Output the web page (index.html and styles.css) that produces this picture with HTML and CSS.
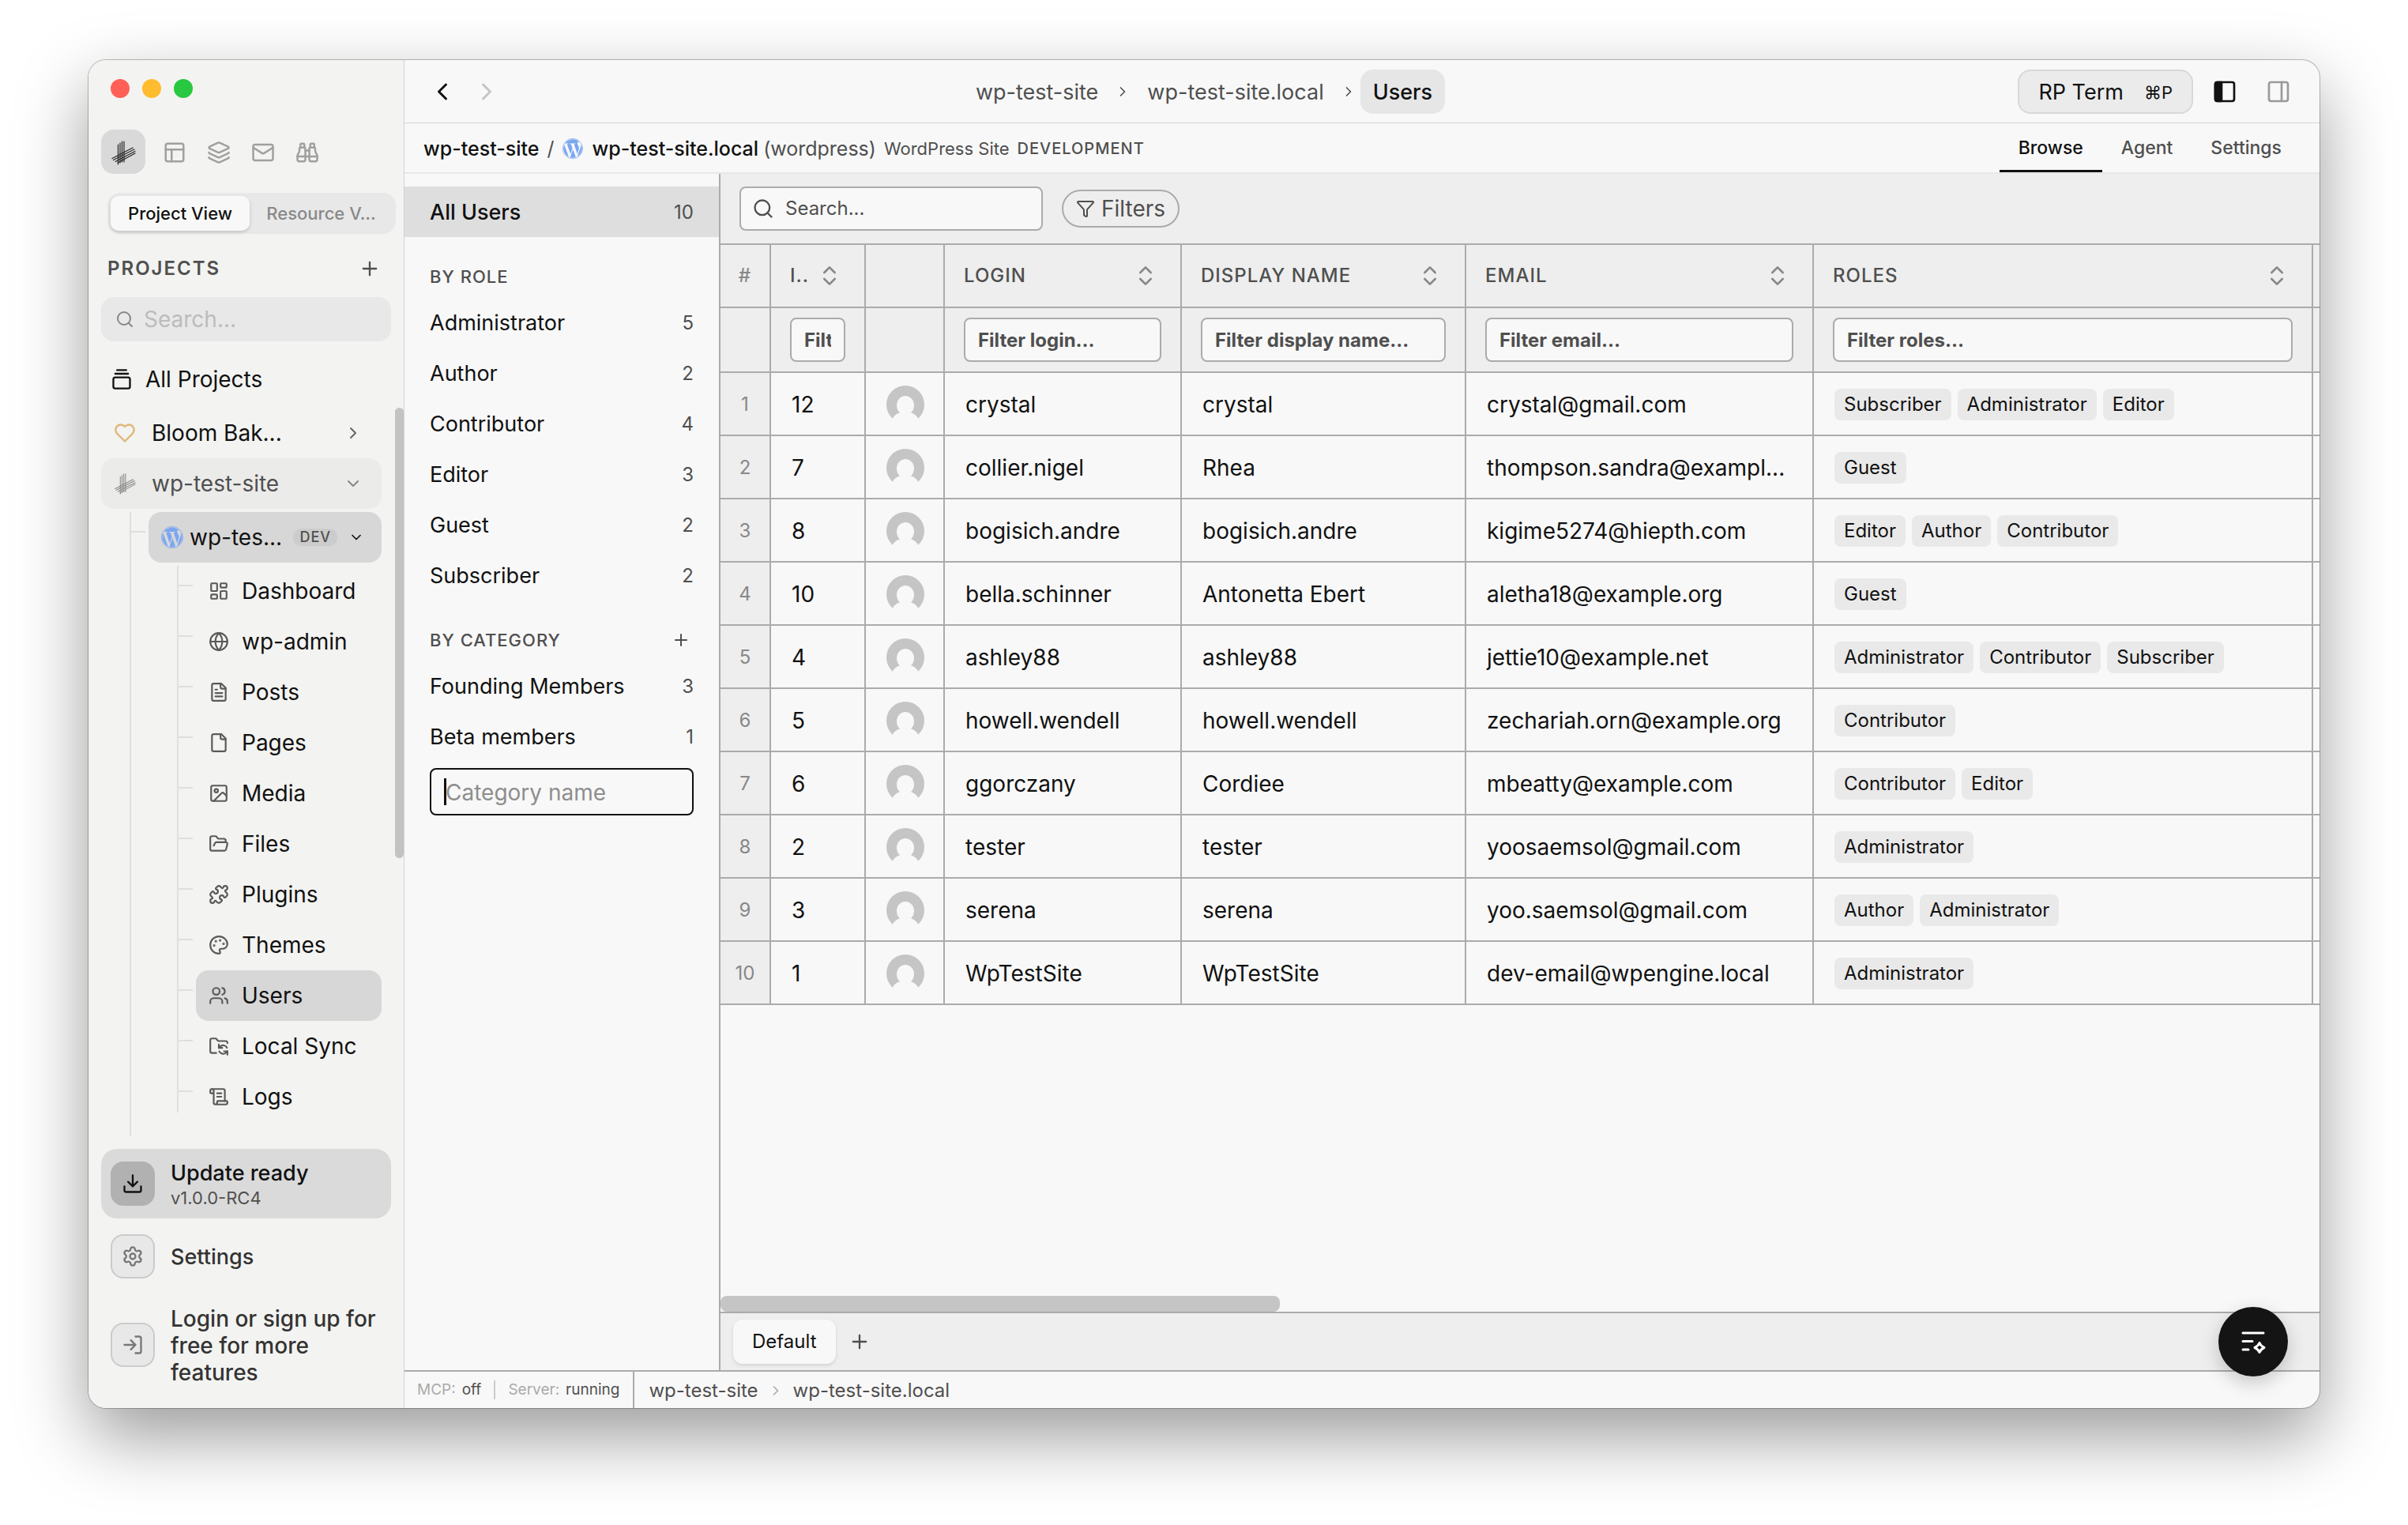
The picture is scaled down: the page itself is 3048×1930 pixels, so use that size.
FILE: index.html
```html
<!DOCTYPE html>
<html lang="en">
<head>
<meta charset="utf-8">
<meta name="viewport" content="width=device-width, initial-scale=1">
<title>Users - wp-test-site.local</title>
<link rel="stylesheet" href="styles.css">
</head>
<body>
<svg class="sprite" aria-hidden="true">
  <symbol id="i-logo" viewBox="0 0 32 32"><path d="M9.500 6v25M12 4v25M14.500 2v26M17 2v26" stroke-width="1.200"/><path d="M2 23.500 28 10M3.500 25.500 30 12M6 27.500 31 14.500M9 29 31 17" stroke-width="1.200"/></symbol>
  <symbol id="i-panels" viewBox="0 0 24 24"><rect x="3" y="3" width="18" height="18" rx="2"/><path d="M3 9h18M9 21V9"/></symbol>
  <symbol id="i-layers" viewBox="0 0 24 24"><path d="M12.830 2.180a2 2 0 0 0-1.660 0L2.600 6.080a1 1 0 0 0 0 1.830l8.580 3.910a2 2 0 0 0 1.660 0l8.580-3.900a1 1 0 0 0 0-1.830z"/><path d="M2 12a1 1 0 0 0 .58.91l8.600 3.910a2 2 0 0 0 1.650 0l8.580-3.900A1 1 0 0 0 22 12"/><path d="M2 17a1 1 0 0 0 .58.91l8.600 3.910a2 2 0 0 0 1.650 0l8.580-3.900A1 1 0 0 0 22 17"/></symbol>
  <symbol id="i-mail" viewBox="0 0 24 24"><rect x="2" y="4" width="20" height="16" rx="2"/><path d="m22 7-8.970 5.700a1.940 1.940 0 0 1-2.060 0L2 7"/></symbol>
  <symbol id="i-binoculars" viewBox="0 0 24 24"><path d="M10 10h4"/><path d="M19 7V4a1 1 0 0 0-1-1h-2a1 1 0 0 0-1 1v3"/><path d="M20 21a2 2 0 0 0 2-2v-3.851c0-1.390-2-2.962-2-4.829V8a1 1 0 0 0-1-1h-4a1 1 0 0 0-1 1v11a2 2 0 0 0 2 2z"/><path d="M22 16H2"/><path d="M4 21a2 2 0 0 1-2-2v-3.851c0-1.390 2-2.962 2-4.829V8a1 1 0 0 1 1-1h4a1 1 0 0 1 1 1v11a2 2 0 0 1-2 2z"/><path d="M9 7V4a1 1 0 0 0-1-1H6a1 1 0 0 0-1 1v3"/></symbol>
  <symbol id="i-plus" viewBox="0 0 24 24"><path d="M5 12h14M12 5v14"/></symbol>
  <symbol id="i-search" viewBox="0 0 24 24"><circle cx="11" cy="11" r="8"/><path d="m21 21-4.300-4.300"/></symbol>
  <symbol id="i-stack" viewBox="0 0 24 24"><path d="M7 2h10M5 6h14"/><rect x="3" y="10" width="18" height="12" rx="2"/></symbol>
  <symbol id="i-heart" viewBox="0 0 24 24"><path d="M19 14c1.490-1.460 3-3.210 3-5.500A5.500 5.500 0 0 0 16.500 3c-1.760 0-3 .5-4.500 2-1.500-1.500-2.740-2-4.500-2A5.500 5.500 0 0 0 2 8.500c0 2.300 1.500 4.050 3 5.500l7 7Z"/></symbol>
  <symbol id="i-right" viewBox="0 0 24 24"><path d="m9 18 6-6-6-6"/></symbol>
  <symbol id="i-left" viewBox="0 0 24 24"><path d="m15 18-6-6 6-6"/></symbol>
  <symbol id="i-down" viewBox="0 0 24 24"><path d="m6 9 6 6 6-6"/></symbol>
  <symbol id="i-wp" viewBox="0 0 24 24"><circle cx="12" cy="12" r="11.650" stroke-width=".7"/><path fill="currentColor" stroke="none" d="M21.469 6.825c.84 1.537 1.318 3.300 1.318 5.175 0 3.979-2.156 7.456-5.363 9.325l3.295-9.527c.615-1.540.820-2.771.820-3.864 0-.405-.026-.78-.07-1.110m-7.981.105c.647-.03 1.232-.105 1.232-.105.582-.075.514-.93-.067-.899 0 0-1.755.135-2.880.135-1.064 0-2.850-.15-2.850-.15-.585-.03-.661.855-.075.885 0 0 .54.061 1.125.09l1.680 4.605-2.370 7.080L5.354 6.900c.649-.03 1.234-.1 1.234-.1.585-.075.516-.93-.065-.896 0 0-1.746.138-2.874.138-.2 0-.438-.008-.69-.015C4.911 3.150 8.235 1.215 12 1.215c2.809 0 5.365 1.072 7.286 2.833-.046-.003-.091-.009-.141-.009-1.060 0-1.812.923-1.812 1.914 0 .89.513 1.643 1.060 2.531.411.72.89 1.643.89 2.977 0 .915-.354 1.994-.821 3.479l-1.075 3.585-3.900-11.610zM12 22.784c-1.059 0-2.081-.153-3.048-.437l3.237-9.406 3.315 9.087c.024.053.05.101.078.149-1.120.393-2.325.607-3.582.607M1.211 12c0-1.564.336-3.050.935-4.390L7.290 21.709C3.694 19.960 1.212 16.271 1.211 12"/></symbol>
  <symbol id="i-dashboard" viewBox="0 0 24 24"><rect x="3" y="3" width="7" height="9" rx="1"/><rect x="14" y="3" width="7" height="5" rx="1"/><rect x="14" y="12" width="7" height="9" rx="1"/><rect x="3" y="16" width="7" height="5" rx="1"/></symbol>
  <symbol id="i-globe" viewBox="0 0 24 24"><circle cx="12" cy="12" r="10"/><path d="M12 2a14.500 14.500 0 0 0 0 20 14.500 14.500 0 0 0 0-20M2 12h20"/></symbol>
  <symbol id="i-file-text" viewBox="0 0 24 24"><path d="M15 2H6a2 2 0 0 0-2 2v16a2 2 0 0 0 2 2h12a2 2 0 0 0 2-2V7Z"/><path d="M14 2v4a2 2 0 0 0 2 2h4M10 9H8M16 13H8M16 17H8"/></symbol>
  <symbol id="i-file" viewBox="0 0 24 24"><path d="M15 2H6a2 2 0 0 0-2 2v16a2 2 0 0 0 2 2h12a2 2 0 0 0 2-2V7Z"/><path d="M14 2v4a2 2 0 0 0 2 2h4"/></symbol>
  <symbol id="i-image" viewBox="0 0 24 24"><rect x="3" y="3" width="18" height="18" rx="2"/><circle cx="9" cy="9" r="2"/><path d="m21 15-3.086-3.086a2 2 0 0 0-2.828 0L6 21"/></symbol>
  <symbol id="i-folder" viewBox="0 0 24 24"><path d="m6 14 1.500-2.900A2 2 0 0 1 9.240 10H20a2 2 0 0 1 1.940 2.500l-1.540 6a2 2 0 0 1-1.950 1.500H4a2 2 0 0 1-2-2V5a2 2 0 0 1 2-2h3.900a2 2 0 0 1 1.690.9l.81 1.200a2 2 0 0 0 1.670.9H18a2 2 0 0 1 2 2v2"/></symbol>
  <symbol id="i-puzzle" viewBox="0 0 24 24"><path d="M15.390 4.390a1 1 0 0 0 1.680-.474 2.500 2.500 0 1 1 3.014 3.015 1 1 0 0 0-.474 1.680l1.683 1.682a2.414 2.414 0 0 1 0 3.414L19.610 15.390a1 1 0 0 1-1.680-.474 2.500 2.500 0 1 0-3.014 3.015 1 1 0 0 1 .474 1.680l-1.683 1.682a2.414 2.414 0 0 1-3.414 0L8.610 19.610a1 1 0 0 0-1.680.474 2.500 2.500 0 1 1-3.014-3.015 1 1 0 0 0 .474-1.680l-1.683-1.682a2.414 2.414 0 0 1 0-3.414L4.390 8.610a1 1 0 0 1 1.680.474 2.500 2.500 0 1 0 3.014-3.015 1 1 0 0 1-.474-1.680l1.683-1.682a2.414 2.414 0 0 1 3.414 0z"/></symbol>
  <symbol id="i-palette" viewBox="0 0 24 24"><path d="M12 2C6.500 2 2 6.500 2 12s4.500 10 10 10c.926 0 1.648-.746 1.648-1.688 0-.437-.18-.835-.437-1.125-.29-.289-.438-.652-.438-1.125a1.640 1.640 0 0 1 1.668-1.668h1.996c3.051 0 5.555-2.503 5.555-5.554C21.965 6.012 17.461 2 12 2z"/><g fill="currentColor"><circle cx="13.500" cy="6.500" r=".5"/><circle cx="17.500" cy="10.500" r=".5"/><circle cx="8.500" cy="7.500" r=".5"/><circle cx="6.500" cy="12.500" r=".5"/></g></symbol>
  <symbol id="i-users" viewBox="0 0 24 24"><path d="M16 21v-2a4 4 0 0 0-4-4H6a4 4 0 0 0-4 4v2"/><circle cx="9" cy="7" r="4"/><path d="M22 21v-2a4 4 0 0 0-3-3.870M16 3.130a4 4 0 0 1 0 7.750"/></symbol>
  <symbol id="i-sync" viewBox="0 0 24 24"><path d="M9 20H4a2 2 0 0 1-2-2V5a2 2 0 0 1 2-2h3.900a2 2 0 0 1 1.690.9l.81 1.200a2 2 0 0 0 1.670.9H20a2 2 0 0 1 2 2v.5"/><path d="M12 10v4h4"/><path d="m12 14 1.535-1.605a5 5 0 0 1 8 1.500"/><path d="M22 22v-4h-4"/><path d="m22 18-1.535 1.605a5 5 0 0 1-8-1.500"/></symbol>
  <symbol id="i-scroll" viewBox="0 0 24 24"><path d="M15 12h-5M15 8h-5M19 17V5a2 2 0 0 0-2-2H4"/><path d="M8 21h12a2 2 0 0 0 2-2v-1a1 1 0 0 0-1-1H11a1 1 0 0 0-1 1v1a2 2 0 1 1-4 0V5a2 2 0 1 0-4 0v2a1 1 0 0 0 1 1h3"/></symbol>
  <symbol id="i-download" viewBox="0 0 24 24"><path d="M21 15v4a2 2 0 0 1-2 2H5a2 2 0 0 1-2-2v-4M7 10l5 5 5-5M12 15V3"/></symbol>
  <symbol id="i-gear" viewBox="0 0 24 24"><path d="M9.671 4.136a2.340 2.340 0 0 1 4.659 0 2.340 2.340 0 0 0 3.319 1.915 2.340 2.340 0 0 1 2.330 4.033 2.340 2.340 0 0 0 0 3.831 2.340 2.340 0 0 1-2.330 4.033 2.340 2.340 0 0 0-3.319 1.915 2.340 2.340 0 0 1-4.659 0 2.340 2.340 0 0 0-3.320-1.915 2.340 2.340 0 0 1-2.330-4.033 2.340 2.340 0 0 0 0-3.831A2.340 2.340 0 0 1 6.350 6.051a2.340 2.340 0 0 0 3.319-1.915"/><circle cx="12" cy="12" r="3"/></symbol>
  <symbol id="i-login" viewBox="0 0 24 24"><path d="M15 3h4a2 2 0 0 1 2 2v14a2 2 0 0 1-2 2h-4M10 17l5-5-5-5M15 12H3"/></symbol>
  <symbol id="i-panel-left" viewBox="0 0 24 24"><rect x="3" y="3" width="18" height="18" rx="2"/><path fill="currentColor" d="M5 3h4v18H5a2 2 0 0 1-2-2V5a2 2 0 0 1 2-2z"/></symbol>
  <symbol id="i-panel-right" viewBox="0 0 24 24"><rect x="3" y="3" width="18" height="18" rx="2"/><path d="M15 3v18"/></symbol>
  <symbol id="i-funnel" viewBox="0 0 24 24"><path d="M10 20a1 1 0 0 0 .553.895l2 1A1 1 0 0 0 14 21v-7a2 2 0 0 1 .517-1.341L21.740 4.670A1 1 0 0 0 21 3H3a1 1 0 0 0-.742 1.670l7.225 7.989A2 2 0 0 1 10 14z"/></symbol>
  <symbol id="i-sort" viewBox="0 0 24 24"><path d="m7 15 5 5 5-5M7 9l5-5 5 5"/></symbol>
  <symbol id="i-avatar" viewBox="0 0 48 48"><circle class="avatar-disc" cx="24" cy="24" r="24"/><g class="avatar-person"><ellipse cx="24" cy="25" rx="11" ry="12"/><ellipse cx="24" cy="46" rx="17" ry="13"/></g></symbol>
  <symbol id="i-assist" viewBox="0 0 36 36"><path d="M5 7h26M5 17.500h12M5 28h7" stroke-width="3"/><path d="M26 19.500c1.500 3.500 2.500 4.500 6 6-3.500 1.500-4.500 2.500-6 6-1.500-3.500-2.500-4.500-6-6 3.500-1.500 4.500-2.500 6-6z" stroke-width="3"/></symbol>
</svg>

<div class="window">
  <aside class="sidebar">
    <div class="lights"><span class="light red"></span><span class="light amber"></span><span class="light green"></span></div>
    <div class="modes">
      <button class="mode active" aria-label="Projects"><svg class="icon s32"><use href="#i-logo"/></svg></button>
      <button class="mode" aria-label="Layout"><svg class="icon s30"><use href="#i-panels"/></svg></button>
      <button class="mode" aria-label="Stacks"><svg class="icon s30"><use href="#i-layers"/></svg></button>
      <button class="mode" aria-label="Mail"><svg class="icon s30"><use href="#i-mail"/></svg></button>
      <button class="mode" aria-label="Find"><svg class="icon s30"><use href="#i-binoculars"/></svg></button>
    </div>
    <div class="segmented">
      <button class="segment active">Project View</button>
      <button class="segment">Resource V...</button>
    </div>
    <div class="section-head">
      <h2 class="section-title">PROJECTS</h2>
      <button class="add" aria-label="Add project"><svg class="icon s28"><use href="#i-plus"/></svg></button>
    </div>
    <label class="side-search"><svg class="icon s24"><use href="#i-search"/></svg><input type="text" placeholder="Search..." aria-label="Search projects"></label>

    <nav class="tree">
      <a class="row all" href="#"><svg class="icon s28"><use href="#i-stack"/></svg><span>All Projects</span></a>
      <a class="row project" href="#"><svg class="icon s28 heart"><use href="#i-heart"/></svg><span>Bloom Bak...</span><svg class="icon s24 arrow"><use href="#i-right"/></svg></a>
      <a class="row project open" href="#"><svg class="icon s28"><use href="#i-logo"/></svg><span>wp-test-site</span><svg class="icon s24 arrow"><use href="#i-down"/></svg></a>
      <div class="branch sites">
        <a class="row site tick" href="#"><svg class="icon s28 wp"><use href="#i-wp"/></svg><span>wp-tes...</span><span class="badge">DEV</span><svg class="icon s20"><use href="#i-down"/></svg></a>
        <div class="branch pages">
          <a class="row page tick" href="#"><svg class="icon s26"><use href="#i-dashboard"/></svg><span>Dashboard</span></a>
          <a class="row page tick" href="#"><svg class="icon s26"><use href="#i-globe"/></svg><span>wp-admin</span></a>
          <a class="row page tick" href="#"><svg class="icon s26"><use href="#i-file-text"/></svg><span>Posts</span></a>
          <a class="row page tick" href="#"><svg class="icon s26"><use href="#i-file"/></svg><span>Pages</span></a>
          <a class="row page tick" href="#"><svg class="icon s26"><use href="#i-image"/></svg><span>Media</span></a>
          <a class="row page tick" href="#"><svg class="icon s26"><use href="#i-folder"/></svg><span>Files</span></a>
          <a class="row page tick" href="#"><svg class="icon s26"><use href="#i-puzzle"/></svg><span>Plugins</span></a>
          <a class="row page tick" href="#"><svg class="icon s26"><use href="#i-palette"/></svg><span>Themes</span></a>
          <a class="row page tick current" href="#"><svg class="icon s26"><use href="#i-users"/></svg><span>Users</span></a>
          <a class="row page tick" href="#"><svg class="icon s26"><use href="#i-sync"/></svg><span>Local Sync</span></a>
          <a class="row page tick" href="#"><svg class="icon s26"><use href="#i-scroll"/></svg><span>Logs</span></a>
        </div>
      </div>
      <div class="tree-thumb"></div>
    </nav>

    <div class="side-foot">
      <button class="foot-row update"><span class="tile"><svg class="icon s28"><use href="#i-download"/></svg></span><span class="foot-text"><span class="foot-title">Update ready</span><span class="foot-sub">v1.0.0-RC4</span></span></button>
      <button class="foot-row"><span class="tile"><svg class="icon s28"><use href="#i-gear"/></svg></span><span class="foot-text"><span class="foot-title">Settings</span></span></button>
      <button class="foot-row"><span class="tile"><svg class="icon s28"><use href="#i-login"/></svg></span><span class="foot-text"><span class="foot-title login">Login or sign up for free for more features</span></span></button>
    </div>
  </aside>

  <main class="main">
    <header class="titlebar">
      <div class="history">
        <button aria-label="Back"><svg class="icon s36"><use href="#i-left"/></svg></button>
        <button aria-label="Forward" disabled><svg class="icon s36"><use href="#i-right"/></svg></button>
      </div>
      <nav class="crumbs" aria-label="Breadcrumb">
        <a href="#">wp-test-site</a><svg class="icon s20"><use href="#i-right"/></svg><a href="#">wp-test-site.local</a><svg class="icon s20"><use href="#i-right"/></svg><a class="here" href="#">Users</a>
      </nav>
      <div class="window-tools">
        <button class="term"><span>RP Term</span><kbd>⌘P</kbd></button>
        <button class="pane on" aria-label="Toggle left panel"><svg class="icon s32"><use href="#i-panel-left"/></svg></button>
        <button class="pane" aria-label="Toggle right panel"><svg class="icon s32"><use href="#i-panel-right"/></svg></button>
      </div>
    </header>

    <div class="subbar">
      <div class="place">
        <strong>wp-test-site</strong><span class="slash">/</span><svg class="icon s26 wp"><use href="#i-wp"/></svg><strong>wp-test-site.local</strong><span class="driver">(wordpress)</span><span class="kind">WordPress Site</span><span class="env">DEVELOPMENT</span>
      </div>
      <nav class="tabs"><a class="tab active" href="#">Browse</a><a class="tab" href="#">Agent</a><a class="tab" href="#">Settings</a></nav>
    </div>

    <div class="content">
      <section class="groups">
        <a class="group selected" href="#"><span>All Users</span><span class="count">10</span></a>
        <div class="group-head"><h3>BY ROLE</h3></div>
        <a class="group" href="#"><span>Administrator</span><span class="count">5</span></a>
        <a class="group" href="#"><span>Author</span><span class="count">2</span></a>
        <a class="group" href="#"><span>Contributor</span><span class="count">4</span></a>
        <a class="group" href="#"><span>Editor</span><span class="count">3</span></a>
        <a class="group" href="#"><span>Guest</span><span class="count">2</span></a>
        <a class="group" href="#"><span>Subscriber</span><span class="count">2</span></a>
        <div class="group-head"><h3>BY CATEGORY</h3><button aria-label="Add category"><svg class="icon s24"><use href="#i-plus"/></svg></button></div>
        <a class="group" href="#"><span>Founding Members</span><span class="count">3</span></a>
        <a class="group" href="#"><span>Beta members</span><span class="count">1</span></a>
        <div class="new-category"><input type="text" placeholder="Category name" aria-label="Category name"><span class="caret"></span></div>
      </section>

      <section class="browser">
        <div class="toolbar">
          <label class="search"><svg class="icon s28"><use href="#i-search"/></svg><input type="text" placeholder="Search..." aria-label="Search users"></label>
          <button class="filters"><svg class="icon s24"><use href="#i-funnel"/></svg>Filters</button>
        </div>
        <div class="grid-scroll">
          <table class="grid">
            <colgroup><col class="c-num"><col class="c-id"><col class="c-pic"><col class="c-login"><col class="c-name"><col class="c-email"><col class="c-roles"><col class="c-more"></colgroup>
            <thead>
              <tr class="labels">
                <th class="num">#</th>
                <th><div class="head"><span>I..</span><svg class="icon s32"><use href="#i-sort"/></svg></div></th>
                <th></th>
                <th><div class="head"><span>LOGIN</span><svg class="icon s32"><use href="#i-sort"/></svg></div></th>
                <th><div class="head"><span>DISPLAY NAME</span><svg class="icon s32"><use href="#i-sort"/></svg></div></th>
                <th><div class="head"><span>EMAIL</span><svg class="icon s32"><use href="#i-sort"/></svg></div></th>
                <th><div class="head"><span>ROLES</span><svg class="icon s32"><use href="#i-sort"/></svg></div></th>
                <th></th>
              </tr>
              <tr class="inputs">
                <th class="num"></th>
                <th><input type="text" placeholder="Filter id..." aria-label="Filter id"></th>
                <th></th>
                <th><input type="text" placeholder="Filter login..." aria-label="Filter login"></th>
                <th><input type="text" placeholder="Filter display name..." aria-label="Filter display name"></th>
                <th><input type="text" placeholder="Filter email..." aria-label="Filter email"></th>
                <th><input type="text" placeholder="Filter roles..." aria-label="Filter roles"></th>
                <th></th>
              </tr>
            </thead>
            <tbody>
              <tr><td class="num">1</td><td>12</td><td class="pic"><svg class="avatar"><use href="#i-avatar"/></svg></td><td>crystal</td><td>crystal</td><td>crystal@gmail.com</td><td><div class="chips"><span class="chip">Subscriber</span><span class="chip">Administrator</span><span class="chip">Editor</span></div></td><td></td></tr>
              <tr><td class="num">2</td><td>7</td><td class="pic"><svg class="avatar"><use href="#i-avatar"/></svg></td><td>collier.nigel</td><td>Rhea</td><td>thompson.sandra@exampl...</td><td><div class="chips"><span class="chip">Guest</span></div></td><td></td></tr>
              <tr><td class="num">3</td><td>8</td><td class="pic"><svg class="avatar"><use href="#i-avatar"/></svg></td><td>bogisich.andre</td><td>bogisich.andre</td><td>kigime5274@hiepth.com</td><td><div class="chips"><span class="chip">Editor</span><span class="chip">Author</span><span class="chip">Contributor</span></div></td><td></td></tr>
              <tr><td class="num">4</td><td>10</td><td class="pic"><svg class="avatar"><use href="#i-avatar"/></svg></td><td>bella.schinner</td><td>Antonetta Ebert</td><td>aletha18@example.org</td><td><div class="chips"><span class="chip">Guest</span></div></td><td></td></tr>
              <tr><td class="num">5</td><td>4</td><td class="pic"><svg class="avatar"><use href="#i-avatar"/></svg></td><td>ashley88</td><td>ashley88</td><td>jettie10@example.net</td><td><div class="chips"><span class="chip">Administrator</span><span class="chip">Contributor</span><span class="chip">Subscriber</span></div></td><td></td></tr>
              <tr><td class="num">6</td><td>5</td><td class="pic"><svg class="avatar"><use href="#i-avatar"/></svg></td><td>howell.wendell</td><td>howell.wendell</td><td>zechariah.orn@example.org</td><td><div class="chips"><span class="chip">Contributor</span></div></td><td></td></tr>
              <tr><td class="num">7</td><td>6</td><td class="pic"><svg class="avatar"><use href="#i-avatar"/></svg></td><td>ggorczany</td><td>Cordiee</td><td>mbeatty@example.com</td><td><div class="chips"><span class="chip">Contributor</span><span class="chip">Editor</span></div></td><td></td></tr>
              <tr><td class="num">8</td><td>2</td><td class="pic"><svg class="avatar"><use href="#i-avatar"/></svg></td><td>tester</td><td>tester</td><td>yoosaemsol@gmail.com</td><td><div class="chips"><span class="chip">Administrator</span></div></td><td></td></tr>
              <tr><td class="num">9</td><td>3</td><td class="pic"><svg class="avatar"><use href="#i-avatar"/></svg></td><td>serena</td><td>serena</td><td>yoo.saemsol@gmail.com</td><td><div class="chips"><span class="chip">Author</span><span class="chip">Administrator</span></div></td><td></td></tr>
              <tr><td class="num">10</td><td>1</td><td class="pic"><svg class="avatar"><use href="#i-avatar"/></svg></td><td>WpTestSite</td><td>WpTestSite</td><td>dev-email@wpengine.local</td><td><div class="chips"><span class="chip">Administrator</span></div></td><td></td></tr>
            </tbody>
          </table>
        </div>
        <div class="grid-track"><div class="grid-thumb"></div></div>
        <div class="sheets">
          <button class="sheet">Default</button>
          <button class="sheet-add" aria-label="Add view"><svg class="icon s28"><use href="#i-plus"/></svg></button>
        </div>
      </section>
    </div>

    <footer class="status">
      <div class="services"><span>MCP:</span><b>off</b><i></i><span>Server:</span><b>running</b></div>
      <nav class="path" aria-label="Location"><a href="#">wp-test-site</a><svg class="icon s20"><use href="#i-right"/></svg><a href="#">wp-test-site.local</a></nav>
    </footer>
  </main>

  <button class="assist" aria-label="Assistant"><svg class="icon s36"><use href="#i-assist"/></svg></button>
</div>
</body>
</html>
```
FILE: styles.css
```css
:root {
  --ink: #111111;
  --soft: #4f4f4f;
  --muted: #888888;
  --line: #ababab;
  --paper: #f8f8f8;
  --bar: #eeeeee;
  --fill: #e8e8e8;
  --side: 400px;
}

* { box-sizing: border-box; }

body {
  margin: 0;
  height: 100vh;
  padding: 76px 112px 148px;
  background: #ffffff;
  color: var(--ink);
  font-family: Inter, "Liberation Sans", sans-serif;
  font-size: 28px;
  line-height: 34px;
}

button, input, kbd { font: inherit; color: inherit; }
button { border: 0; padding: 0; background: none; display: flex; align-items: center; justify-content: center; }
input { border: 0; padding: 0; background: none; outline: 0; min-width: 0; }
a { color: inherit; text-decoration: none; }
h2, h3 { margin: 0; }

.sprite { position: absolute; width: 0; height: 0; }
.icon { flex: none; display: block; fill: none; stroke: currentColor; stroke-width: 2; stroke-linecap: round; stroke-linejoin: round; }
.s20 { width: 20px; height: 20px; }
.s24 { width: 24px; height: 24px; }
.s26 { width: 26px; height: 26px; }
.s28 { width: 28px; height: 28px; }
.s30 { width: 30px; height: 30px; }
.s32 { width: 32px; height: 32px; }
.s36 { width: 36px; height: 36px; }
.wp { color: #7ba6f2; }

.window {
  position: relative;
  display: flex;
  height: 100%;
  border-radius: 22px;
  background: var(--paper);
  overflow: hidden;
  box-shadow: 0 0 0 1px rgba(0, 0, 0, .25), 0 36px 90px rgba(0, 0, 0, .4);
}

/* Sidebar */
.sidebar {
  flex: none;
  width: var(--side);
  display: flex;
  flex-direction: column;
  background: #f3f3f1;
  border-right: 1px solid #d2d2d2;
}
.lights { display: flex; gap: 16px; padding: 24px 28px 40px; }
.light { width: 24px; height: 24px; border-radius: 50%; }
.red { background: #ff5f57; }
.amber { background: #febc2e; }
.green { background: #28c840; }

.modes { display: flex; padding: 0 16px; color: #a0a0a0; }
.mode { width: 56px; height: 56px; padding-top: 2px; border-radius: 16px; }
.mode.active { margin-right: 9px; background: #d9d9d9; color: #222222; }

.segmented { display: flex; margin: 24px 10px 0 24px; padding: 4px; border-radius: 16px; background: var(--fill); font-size: 22px; font-weight: 500; }
.segment { flex: 1; height: 44px; border-radius: 10px; color: var(--muted); white-space: nowrap; }
.segment.active { flex: none; width: 176px; background: var(--paper); color: var(--ink); box-shadow: 0 2px 4px rgba(0, 0, 0, .16); }

.section-head { display: flex; align-items: center; justify-content: space-between; height: 56px; margin: 16px 15px 8px 24px; color: var(--soft); }
.section-title { font-size: 24px; font-weight: 600; letter-spacing: 2px; }
.add { width: 56px; height: 56px; }

.side-search { display: flex; align-items: center; gap: 12px; height: 56px; margin: 0 16px; padding: 0 18px; border-radius: 16px; background: var(--fill); color: var(--muted); }
.side-search input { flex: 1; }
.side-search input::placeholder { color: #bcbcbc; opacity: 1; }

.tree { position: relative; flex: 1; min-height: 0; overflow: hidden; margin-top: 16px; padding: 0 28px 0 16px; }
.row { display: flex; align-items: center; height: 64px; border-radius: 16px; white-space: nowrap; }
.row.all { gap: 16px; padding: 0 12px; margin-bottom: 4px; }
.row.project { gap: 20px; padding: 0 24px 0 16px; }
.row.open { background: #ebebea; color: var(--soft); }
.row.open .icon { color: #888888; }
.row .heart { color: #deb878; }
.arrow { margin-left: auto; color: #666666; }
.branch { margin: 4px 0 0 36px; padding-left: 22px; border-left: 2px solid #dfdfdf; }
.sites { height: 2000px; }
.pages { display: flow-root; }
.tick { position: relative; }
.tick::before { content: ""; position: absolute; left: -22px; top: 24px; width: 18px; height: 2px; background: #dfdfdf; }
.row.site { gap: 8px; padding: 0 22px 0 16px; background: #d7d7d7; }
.badge { margin: 0 6px 0 auto; padding: 0 8px; border-radius: 10px; background: #cccccc; color: var(--soft); font-size: 18px; font-weight: 500; line-height: 22px; letter-spacing: 1px; }
.row.page { gap: 16px; padding: 0 16px; }
.row.page .icon { color: #5a5a5a; }
.row.page:last-child { margin-bottom: -12px; }
.row.current { background: #d7d7d7; }
.tree-thumb { position: absolute; top: 68px; right: 0; width: 11px; height: 570px; border-radius: 6px; background: #c3c3c3; }

.side-foot { display: flex; flex-direction: column; gap: 4px; padding: 16px; }
.foot-row { justify-content: flex-start; gap: 20px; min-height: 88px; padding: 12px; border-radius: 20px; text-align: left; color: #333333; }
.foot-row.update { background: #dadada; color: var(--ink); }
.tile { flex: none; display: flex; align-items: center; justify-content: center; width: 56px; height: 56px; border: 2px solid #cbcbcb; border-radius: 16px; background: var(--fill); color: #777777; }
.update .tile { border-color: #b1b1b1; background: #b1b1b1; color: var(--ink); }
.foot-text { display: flex; flex-direction: column; padding-top: 2px; }
.foot-title { font-size: 27px; font-weight: 500; }
.foot-title.login { font-size: 28px; }
.foot-sub { font-size: 22px; line-height: 28px; color: var(--soft); }

/* Main column */
.main { flex: 1; min-width: 0; display: flex; flex-direction: column; }
.titlebar { display: grid; grid-template-columns: 1fr auto 1fr var(--side); align-items: center; height: 80px; border-bottom: 1px solid #d4d4d4; }
.history { display: flex; padding-left: 20px; }
.history button { width: 56px; height: 56px; }
.history button:disabled { color: #c4c4c4; }
.crumbs { display: flex; align-items: center; font-size: 27px; color: var(--soft); }
.crumbs a { padding: 11px 16px 9px; line-height: 36px; }
.crumbs .icon { margin: 0 5px; }
.crumbs .here { border-radius: 16px; background: #e6e6e6; color: var(--ink); font-weight: 500; }
.window-tools { grid-column: 4; display: flex; align-items: center; justify-content: flex-end; padding-right: 36px; }
.term { gap: 26px; height: 56px; margin-right: 24px; padding: 2px 24px 0; border: 2px solid #d8d8d8; border-radius: 16px; background: #ebebeb; font-size: 27px; }
.term kbd { font-size: 22px; }
.pane { color: #9a9a9a; }
.pane.on { margin-right: 36px; color: var(--ink); }

.subbar { display: flex; justify-content: space-between; height: 64px; border-bottom: 2px solid #e8e8e8; padding: 0 24px; }
.place { display: flex; align-items: center; padding-top: 2px; font-size: 25px; color: var(--soft); white-space: nowrap; }
.place strong { font-weight: 500; color: var(--ink); }
.slash { margin: 0 10px; }
.place .wp { margin-right: 12px; }
.driver { margin: 0 10px 0 6px; }
.kind { margin-right: 10px; font-size: 22px; }
.env { font-size: 20px; font-weight: 500; letter-spacing: 1px; }
.tabs { display: flex; font-size: 23px; font-weight: 500; color: var(--soft); }
.tab { display: flex; align-items: center; padding: 0 24px; border-top: 3px solid transparent; border-bottom: 3px solid transparent; }
.tab.active { color: var(--ink); border-bottom-color: var(--ink); }

.content { flex: 1; min-height: 0; display: flex; }
.groups { flex: none; width: var(--side); padding-top: 16px; border-right: 2px solid var(--line); font-size: 27px; }
.group { display: flex; align-items: center; justify-content: space-between; height: 64px; padding: 2px 32px 0; }
.group.selected { background: #dedede; font-weight: 500; }
.count { font-size: 24px; font-weight: 400; color: var(--soft); }
.group-head { display: flex; align-items: center; justify-content: space-between; height: 76px; padding: 24px 36px 0 32px; color: var(--soft); }
.group-head h3 { font-size: 22px; font-weight: 500; letter-spacing: 1px; }
.new-category { position: relative; margin: 8px 32px 0; }
.new-category input { width: 100%; height: 60px; padding: 2px 18px 0; border: 2px solid var(--ink); border-radius: 8px; font-size: 28px; }
.new-category input::placeholder { color: #8e8e8e; opacity: 1; }
.caret { position: absolute; left: 18px; top: 13px; width: 3px; height: 34px; background: var(--ink); }

/* Data browser */
.browser { flex: 1; min-width: 0; display: flex; flex-direction: column; }
.toolbar { display: flex; align-items: center; gap: 24px; height: 90px; padding: 0 24px; background: var(--bar); border-bottom: 2px solid var(--line); }
.search { display: flex; align-items: center; gap: 14px; width: 384px; height: 56px; padding: 0 14px; border: 2px solid var(--line); border-radius: 8px; background: var(--paper); color: var(--soft); font-size: 24px; }
.search input { flex: 1; }
input::placeholder { color: var(--soft); opacity: 1; }
.filters { gap: 8px; height: 48px; padding: 0 16px; border: 2px solid var(--line); border-radius: 24px; color: var(--soft); font-size: 28px; }

.grid-scroll { flex: 1; min-height: 0; overflow: hidden; }
.grid { width: max-content; table-layout: fixed; border-collapse: separate; border-spacing: 0; }
.grid th, .grid td { padding: 0; border-right: 2px solid var(--line); border-bottom: 2px solid var(--line); text-align: left; white-space: nowrap; }
.grid td { height: 80px; padding: 2px 0 0 26px; }
.grid th { padding: 0 24px; background: var(--bar); font-size: 24px; font-weight: 500; letter-spacing: 1px; color: var(--soft); }
.labels th { height: 80px; }
.inputs th { height: 82px; }
.grid .num { padding-left: 0; padding-right: 0; text-align: center; background: var(--bar); color: var(--muted); font-size: 24px; }
.grid .pic { padding-left: 2px; }
.avatar { display: block; width: 48px; height: 48px; margin: 0 auto; }
.avatar-disc { fill: #c5c5c5; }
.avatar-person { fill: #f8f8f8; }
.c-num { width: 64px; }
.c-id { width: 120px; }
.c-pic { width: 100px; }
.c-login { width: 300px; }
.c-name { width: 360px; }
.c-email { width: 440px; }
.c-roles { width: 632px; }
.c-more { width: 300px; }
.head { display: flex; align-items: center; justify-content: space-between; }
.head .icon { margin-right: 4px; color: var(--muted); }
.inputs input { display: block; width: 100%; height: 56px; padding: 0 16px; border: 2px solid var(--line); border-radius: 8px; background: var(--paper); font-size: 24px; font-weight: 700; letter-spacing: 0; }
.chips { display: flex; gap: 8px; }
.chip { padding: 0 12px; border-radius: 8px; background: #e9e9e9; font-size: 24px; line-height: 40px; }

.grid-track { height: 20px; }
.grid-thumb { width: 35%; height: 20px; border-radius: 8px; background: #c5c5c5; }
.sheets { display: flex; align-items: center; gap: 2px; height: 74px; padding: 0 16px; background: var(--bar); border-top: 2px solid var(--line); }
.sheet { height: 56px; padding: 0 24px; border-radius: 12px; background: var(--paper); font-size: 24px; box-shadow: 0 2px 4px rgba(0, 0, 0, .12); }
.sheet-add { width: 56px; height: 56px; color: var(--soft); }

.status { display: flex; height: 48px; border-top: 2px solid var(--line); font-size: 24px; color: var(--soft); }
.services { display: flex; align-items: center; gap: 8px; padding: 0 17px 0 16px; border-right: 2px solid var(--line); font-size: 19px; color: #aaaaaa; }
.services b { font-weight: 400; color: var(--soft); }
.services i { width: 2px; height: 24px; margin: 0 8px; background: #cccccc; }
.path { display: flex; align-items: center; gap: 12px; padding: 2px 18px 0; }
.path .icon { color: #aaaaaa; }

.assist { position: absolute; right: 40px; bottom: 40px; width: 88px; height: 88px; border-radius: 50%; background: #141414; color: #ffffff; box-shadow: 0 8px 24px rgba(0, 0, 0, .2); }
```
